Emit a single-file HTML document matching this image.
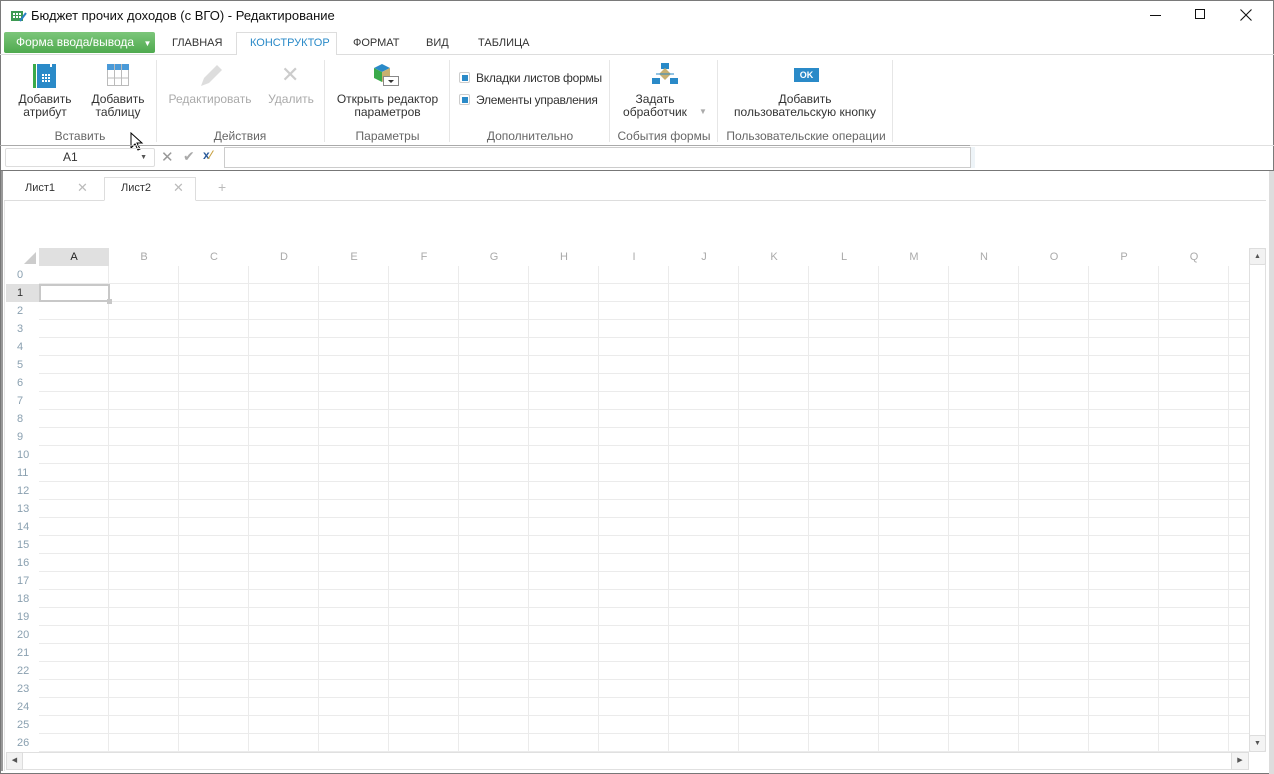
<!DOCTYPE html>
<html><head><meta charset="utf-8"><style>
*{box-sizing:border-box;margin:0;padding:0}
body{width:1274px;height:774px;overflow:hidden;background:#fff;font-family:"Liberation Sans","DejaVu Sans",sans-serif;font-size:12px;color:#333;position:relative}
.a{position:absolute}
.t{white-space:nowrap}
.lbl{color:#666;font-size:12px;text-align:center}
.btn{text-align:center;font-size:12px;color:#333;line-height:13px}
.sep{position:absolute;top:60px;width:1px;height:82px;background:#e6e6e6}
.ch{position:absolute;top:248px;height:18px;width:70px;text-align:center;line-height:18px;color:#aaa;font-size:11px}
.rh{position:absolute;left:6px;width:33px;height:18px;line-height:18px;color:#8aa0b0;font-size:11px;padding-left:11px}
</style></head><body>
<div class="a" style="left:0;top:0;width:1274px;height:774px;border:1px solid #7a7a7a"></div>
<!-- title -->
<svg class="a" style="left:11px;top:9px" width="16" height="14"><rect x="0" y="2" width="12" height="10" fill="#3d9a52"/><g fill="#fff"><rect x="2" y="4" width="2" height="2"/><rect x="5" y="4" width="2" height="2"/><rect x="8" y="4" width="2" height="2"/><rect x="2" y="7" width="2" height="2"/><rect x="5" y="7" width="2" height="2"/><rect x="8" y="7" width="2" height="2"/></g><path d="M9 12 L15 4" stroke="#2a80c5" stroke-width="2"/></svg>
<div class="a t" style="left:31px;top:8px;font-size:13px;color:#111">Бюджет прочих доходов (с ВГО) - Редактирование</div>
<div class="a" style="left:1150px;top:15px;width:11px;height:1px;background:#111"></div>
<div class="a" style="left:1195px;top:9px;width:10px;height:10px;border:1px solid #111"></div>
<svg class="a" style="left:1240px;top:9px" width="12" height="12"><path d="M0.5 0.5L11.5 11.5M11.5 0.5L0.5 11.5" stroke="#111" stroke-width="1.1"/></svg>
<!-- tabs -->
<div class="a" style="left:4px;top:32px;width:151px;height:21px;background:linear-gradient(#7cc67a,#4faa4f);border-radius:2px;color:#fff;font-size:12px;line-height:21px;padding-left:12px">Форма ввода/вывода <span style="font-size:8px;margin-left:6px">▼</span></div>
<div class="a" style="left:0;top:54px;width:1274px;height:1px;background:#ddd"></div>
<div class="a" style="left:236px;top:32px;width:101px;height:23px;background:#fff;border:1px solid #ddd;border-bottom:none"></div>
<div class="a t" style="left:172px;top:37px;font-size:11px;color:#333">ГЛАВНАЯ</div>
<div class="a t" style="left:250px;top:37px;font-size:11px;color:#2a8ac8">КОНСТРУКТОР</div>
<div class="a t" style="left:353px;top:37px;font-size:11px;color:#333">ФОРМАТ</div>
<div class="a t" style="left:426px;top:37px;font-size:11px;color:#333">ВИД</div>
<div class="a t" style="left:478px;top:37px;font-size:11px;color:#333">ТАБЛИЦА</div>
<!-- ribbon -->
<div class="sep" style="left:156px"></div><div class="sep" style="left:324px"></div><div class="sep" style="left:449px"></div><div class="sep" style="left:609px"></div><div class="sep" style="left:717px"></div><div class="sep" style="left:892px"></div>
<svg class="a" style="left:33px;top:64px" width="24" height="24"><rect x="0" y="0" width="3" height="24" fill="#3aaa4a"/><path d="M4 0h13v3h2v-3h4v24h-19z" fill="#2a8ac8"/><g fill="#fff"><rect x="9" y="10" width="2" height="2"/><rect x="12" y="10" width="2" height="2"/><rect x="15" y="10" width="2" height="2"/><rect x="9" y="13" width="2" height="2"/><rect x="12" y="13" width="2" height="2"/><rect x="15" y="13" width="2" height="2"/><rect x="9" y="16" width="2" height="2"/><rect x="12" y="16" width="2" height="2"/><rect x="15" y="16" width="2" height="2"/></g></svg>
<div class="a btn" style="left:10px;top:93px;width:70px">Добавить<br>атрибут</div>
<svg class="a" style="left:107px;top:64px" width="23" height="22"><rect x="0" y="0" width="22" height="6" fill="#4a9ad8"/><path d="M0.5 6v15.5h21v-15.5M7.5 0v22M14.5 0v22M0 14h22" stroke="#bbb" fill="none"/></svg>
<div class="a btn" style="left:83px;top:93px;width:70px">Добавить<br>таблицу</div>
<svg class="a" style="left:198px;top:63px" width="26" height="26"><path d="M3 23l3-8 13-13 5 5-13 13z" fill="#ddd"/></svg>
<div class="a btn" style="left:165px;top:93px;width:90px;color:#aaa">Редактировать</div>
<div class="a t" style="left:281px;top:62px;font-size:22px;color:#ccc">✕</div>
<div class="a btn" style="left:266px;top:93px;width:50px;color:#aaa">Удалить</div>
<svg class="a" style="left:374px;top:62px" width="28" height="26"><path d="M0 6l8-4 8 4-8 4z" fill="#2a8ac8"/><path d="M0 6v10l8 4v-10z" fill="#3aaa4a"/><path d="M16 6v10l-8 4v-10z" fill="#c8b070"/><rect x="9.5" y="14.5" width="15" height="9" fill="#fff" stroke="#888"/><path d="M14 18h6l-3 3z" fill="#333"/></svg>
<div class="a btn" style="left:330px;top:93px;width:115px">Открыть редактор<br>параметров</div>
<div class="a" style="left:459px;top:72px;width:11px;height:11px;border:1px solid #ccc;border-radius:2px;background:#fff"><div style="margin:1.5px;width:6px;height:6px;background:#2a8ac8"></div></div>
<div class="a t" style="left:476px;top:71px;letter-spacing:-0.25px">Вкладки листов формы</div>
<div class="a" style="left:459px;top:94px;width:11px;height:11px;border:1px solid #ccc;border-radius:2px;background:#fff"><div style="margin:1.5px;width:6px;height:6px;background:#2a8ac8"></div></div>
<div class="a t" style="left:476px;top:93px;letter-spacing:-0.25px">Элементы управления</div>
<svg class="a" style="left:652px;top:63px" width="26" height="24"><rect x="9" y="0" width="8" height="6" fill="#2a8ac8"/><path d="M13 5l6 6-6 6-6-6z" fill="#c8b070"/><path d="M4 11h18" stroke="#2a8ac8"/><rect x="0" y="15" width="8" height="6" fill="#2a8ac8"/><rect x="18" y="15" width="8" height="6" fill="#2a8ac8"/></svg>
<div class="a btn" style="left:620px;top:93px;width:70px">Задать<br>обработчик</div>
<div class="a t" style="left:699px;top:107px;font-size:8px;color:#aaa">▼</div>
<div class="a" style="left:794px;top:68px;width:25px;height:14px;background:#2a8ac8;color:#fff;font-size:9px;font-weight:bold;text-align:center;line-height:14px">OK</div>
<div class="a btn" style="left:730px;top:93px;width:150px">Добавить<br>пользовательскую кнопку</div>
<div class="a lbl t" style="left:40px;top:129px;width:80px">Вставить</div>
<div class="a lbl t" style="left:200px;top:129px;width:80px">Действия</div>
<div class="a lbl t" style="left:340px;top:129px;width:95px">Параметры</div>
<div class="a lbl t" style="left:470px;top:129px;width:120px">Дополнительно</div>
<div class="a lbl t" style="left:614px;top:129px;width:100px">События формы</div>
<div class="a lbl t" style="left:722px;top:129px;width:168px">Пользовательские операции</div>
<svg class="a" style="left:130px;top:132px" width="14" height="20"><path d="M1 1v15l4-4 3 6 2-1-3-6h5z" fill="#fff" stroke="#000"/></svg>
<!-- formula bar -->
<div class="a" style="left:0;top:145px;width:970px;height:1px;background:#aaa"></div>
<div class="a" style="left:970px;top:145px;width:304px;height:1px;background:#e0e0e0"></div>
<div class="a" style="left:5px;top:148px;width:150px;height:19px;border:1px solid #ddd;border-radius:2px;font-size:12px;line-height:17px;padding-left:57px">A1<span style="position:absolute;right:7px;font-size:7px;color:#555">▼</span></div>
<div class="a t" style="left:161px;top:148px;font-size:15px;color:#999">✕</div>
<div class="a t" style="left:183px;top:148px;font-size:14px;color:#aaa">✔</div>
<div class="a t" style="left:203px;top:148px;font-size:12px;color:#2a5a9a;font-weight:bold">x<span style="color:#c8a040">⁄</span></div>
<div class="a" style="left:224px;top:147px;width:747px;height:21px;border:1px solid #ccc"></div>
<div class="a" style="left:971px;top:147px;width:4px;height:21px;background:#eef4f8"></div>
<!-- content frame -->
<div class="a" style="left:0;top:170px;width:1274px;height:604px;background:#fff;border:1px solid #777;border-top:1px solid #777"></div>
<div class="a" style="left:1269px;top:171px;width:5px;height:603px;background:#ddd"></div>
<div class="a" style="left:1px;top:171px;width:2px;height:600px;background:#999"></div>
<!-- sheet tabs -->
<div class="a" style="left:4px;top:200px;width:1262px;height:1px;background:#ddd"></div>
<div class="a" style="left:104px;top:177px;width:92px;height:24px;border:1px solid #ddd;border-bottom:1px solid #fff;background:#fff"></div>
<div class="a t" style="left:25px;top:182px;font-size:11px;color:#333">Лист1</div>
<div class="a t" style="left:77px;top:180px;font-size:13px;color:#bbb">✕</div>
<div class="a t" style="left:121px;top:182px;font-size:11px;color:#333">Лист2</div>
<div class="a t" style="left:173px;top:180px;font-size:13px;color:#bbb">✕</div>
<div class="a t" style="left:218px;top:179px;font-size:14px;color:#bbb">+</div>
<div class="a" style="left:4px;top:201px;width:1px;height:570px;background:#e6e6e6"></div>
<!-- grid -->
<svg class="a" style="left:24px;top:252px" width="13" height="12"><path d="M12 0v12h-12z" fill="#ccc"/></svg>
<div class="a" style="left:39px;top:248px;width:70px;height:18px;background:#e0e0e0"></div>
<div class="a" style="left:6px;top:284px;width:33px;height:18px;background:#e0e0e0"></div>
<div class="a" style="left:39px;top:266px;width:1210px;height:486px;background-image:linear-gradient(90deg,transparent 69px,#ebebeb 69px,#ebebeb 70px),linear-gradient(180deg,transparent 17px,#ebebeb 17px,#ebebeb 18px);background-size:70px 18px,70px 18px;background-position:0 0,0 0"></div>
<div class="a" style="left:39px;top:284px;width:71px;height:18px;border:2px solid #c8c8c8"></div>
<div class="a" style="left:107px;top:299px;width:5px;height:5px;background:#c8c8c8"></div>
<div class="ch" style="left:39px;color:#222">A</div><div class="ch" style="left:109px">B</div><div class="ch" style="left:179px">C</div><div class="ch" style="left:249px">D</div><div class="ch" style="left:319px">E</div><div class="ch" style="left:389px">F</div><div class="ch" style="left:459px">G</div><div class="ch" style="left:529px">H</div><div class="ch" style="left:599px">I</div><div class="ch" style="left:669px">J</div><div class="ch" style="left:739px">K</div><div class="ch" style="left:809px">L</div><div class="ch" style="left:879px">M</div><div class="ch" style="left:949px">N</div><div class="ch" style="left:1019px">O</div><div class="ch" style="left:1089px">P</div><div class="ch" style="left:1159px">Q</div>
<div class="rh" style="top:266px">0</div><div class="rh" style="top:284px;color:#333">1</div><div class="rh" style="top:302px">2</div><div class="rh" style="top:320px">3</div><div class="rh" style="top:338px">4</div><div class="rh" style="top:356px">5</div><div class="rh" style="top:374px">6</div><div class="rh" style="top:392px">7</div><div class="rh" style="top:410px">8</div><div class="rh" style="top:428px">9</div><div class="rh" style="top:446px">10</div><div class="rh" style="top:464px">11</div><div class="rh" style="top:482px">12</div><div class="rh" style="top:500px">13</div><div class="rh" style="top:518px">14</div><div class="rh" style="top:536px">15</div><div class="rh" style="top:554px">16</div><div class="rh" style="top:572px">17</div><div class="rh" style="top:590px">18</div><div class="rh" style="top:608px">19</div><div class="rh" style="top:626px">20</div><div class="rh" style="top:644px">21</div><div class="rh" style="top:662px">22</div><div class="rh" style="top:680px">23</div><div class="rh" style="top:698px">24</div><div class="rh" style="top:716px">25</div><div class="rh" style="top:734px">26</div>
<!-- scrollbars -->
<div class="a" style="left:1249px;top:248px;width:17px;height:504px;border:1px solid #e0e0e0;background:#fff"></div>
<div class="a" style="left:1249px;top:248px;width:17px;height:17px;border:1px solid #ddd;border-radius:2px;background:#f2f2f2;font-size:7px;text-align:center;line-height:15px;color:#555">▲</div>
<div class="a" style="left:1249px;top:735px;width:17px;height:17px;border:1px solid #ddd;border-radius:2px;background:#f4f4f4;font-size:7px;text-align:center;line-height:15px;color:#555">▼</div>
<div class="a" style="left:6px;top:752px;width:1243px;height:18px;border:1px solid #e0e0e0;background:#fff"></div>
<div class="a" style="left:6px;top:752px;width:17px;height:18px;border:1px solid #ddd;background:#f2f2f2;font-size:7px;text-align:center;line-height:16px;color:#555">◀</div>
<div class="a" style="left:1231px;top:752px;width:18px;height:18px;border:1px solid #ddd;background:#f4f4f4;font-size:7px;text-align:center;line-height:16px;color:#555">▶</div>
</body></html>
